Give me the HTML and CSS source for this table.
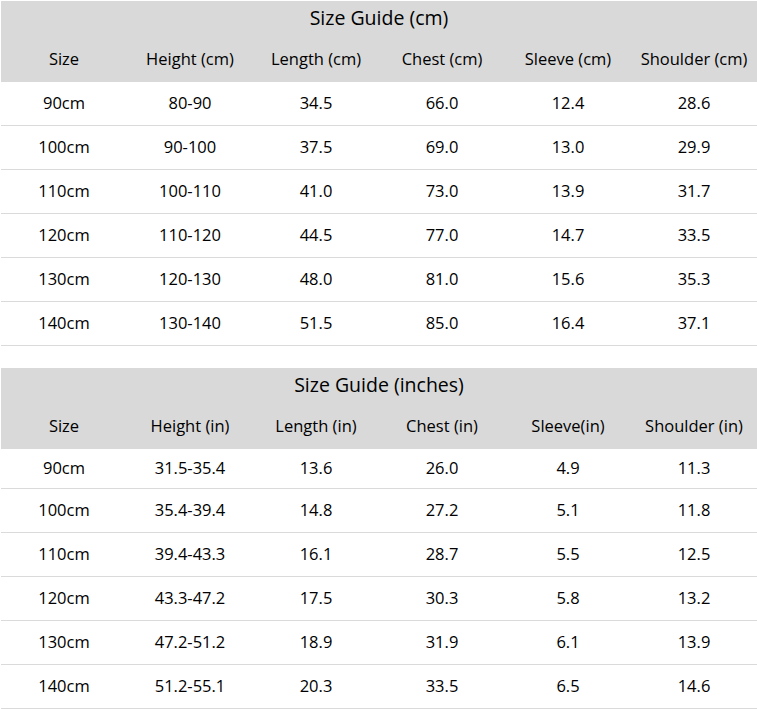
FILE: index.html
```html
<!DOCTYPE html>
<html>
<head>
<meta charset="utf-8">
<link rel="stylesheet" href="styles.css">
</head>
<body>
<div class="page">
  <section class="guide">
    <div class="head">
      <div class="title">Size Guide (cm)</div>
      <div class="row cols">
        <span>Size</span><span>Height (cm)</span><span>Length (cm)</span><span>Chest (cm)</span><span>Sleeve (cm)</span><span>Shoulder (cm)</span>
      </div>
    </div>
    <div class="row data"><span>90cm</span><span>80-90</span><span>34.5</span><span>66.0</span><span>12.4</span><span>28.6</span></div>
    <div class="row data"><span>100cm</span><span>90-100</span><span>37.5</span><span>69.0</span><span>13.0</span><span>29.9</span></div>
    <div class="row data"><span>110cm</span><span>100-110</span><span>41.0</span><span>73.0</span><span>13.9</span><span>31.7</span></div>
    <div class="row data"><span>120cm</span><span>110-120</span><span>44.5</span><span>77.0</span><span>14.7</span><span>33.5</span></div>
    <div class="row data"><span>130cm</span><span>120-130</span><span>48.0</span><span>81.0</span><span>15.6</span><span>35.3</span></div>
    <div class="row data"><span>140cm</span><span>130-140</span><span>51.5</span><span>85.0</span><span>16.4</span><span>37.1</span></div>
  </section>
  <section class="guide inches">
    <div class="head">
      <div class="title">Size Guide (inches)</div>
      <div class="row cols">
        <span>Size</span><span>Height (in)</span><span>Length (in)</span><span>Chest (in)</span><span>Sleeve(in)</span><span>Shoulder (in)</span>
      </div>
    </div>
    <div class="row data first"><span>90cm</span><span>31.5-35.4</span><span>13.6</span><span>26.0</span><span>4.9</span><span>11.3</span></div>
    <div class="row data"><span>100cm</span><span>35.4-39.4</span><span>14.8</span><span>27.2</span><span>5.1</span><span>11.8</span></div>
    <div class="row data"><span>110cm</span><span>39.4-43.3</span><span>16.1</span><span>28.7</span><span>5.5</span><span>12.5</span></div>
    <div class="row data"><span>120cm</span><span>43.3-47.2</span><span>17.5</span><span>30.3</span><span>5.8</span><span>13.2</span></div>
    <div class="row data"><span>130cm</span><span>47.2-51.2</span><span>18.9</span><span>31.9</span><span>6.1</span><span>13.9</span></div>
    <div class="row data"><span>140cm</span><span>51.2-55.1</span><span>20.3</span><span>33.5</span><span>6.5</span><span>14.6</span></div>
  </section>
</div>
</body>
</html>
```
FILE: styles.css
```css
html, body {
  margin: 0;
  padding: 0;
  background: #ffffff;
}
.page {
  margin: 1px 0 0 1px;
  width: 756px;
  display: flex;
  flex-direction: column;
  gap: 22px;
  font-family: "Open Sans", "Noto Sans", sans-serif;
  color: #000000;
}
.head {
  background: #d9d9d9;
  height: 81px;
  display: flex;
  flex-direction: column;
}
.title {
  height: 35px;
  box-sizing: border-box;
  padding-bottom: 2px;
  display: flex;
  align-items: center;
  justify-content: center;
  font-size: 19.5px;
}
.row {
  display: grid;
  grid-template-columns: repeat(6, 1fr);
  align-items: center;
  text-align: center;
  font-size: 16.5px;
  box-sizing: border-box;
  padding-bottom: 2px;
}
.cols {
  flex: 1;
}
.data {
  height: 44px;
  border-bottom: 1px solid #dadada;
}
.data.first {
  height: 40px;
}
```
